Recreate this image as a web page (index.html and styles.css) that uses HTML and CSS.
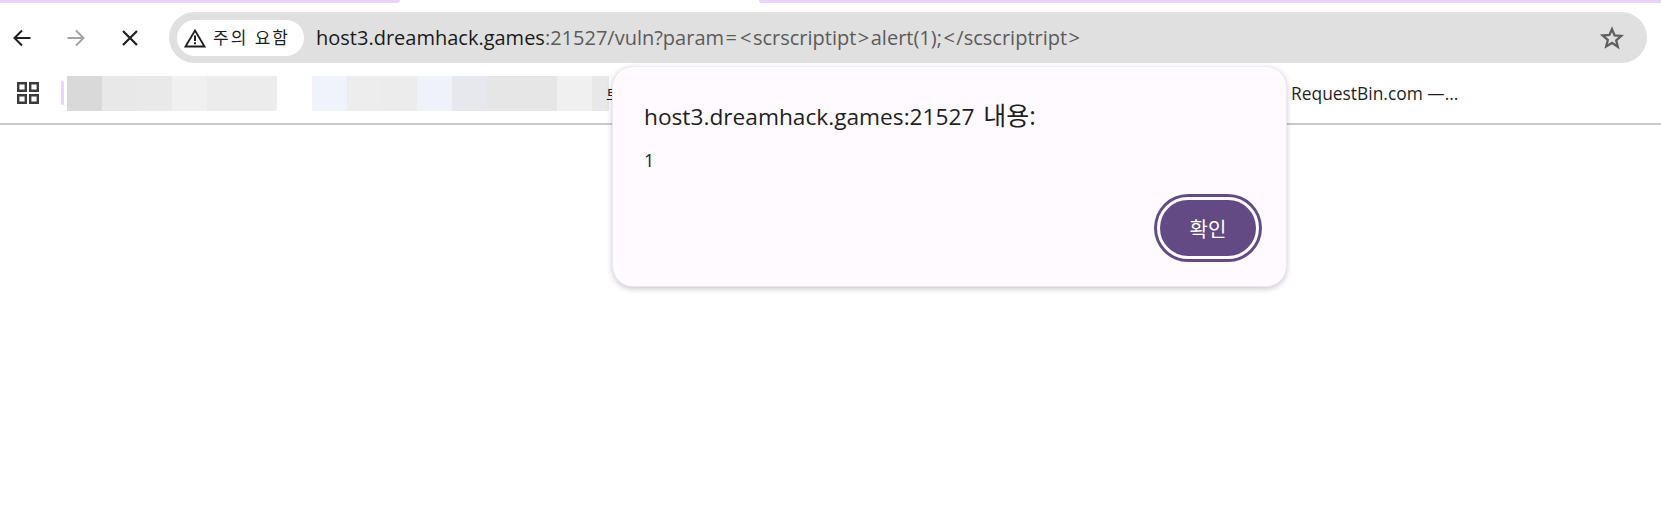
FILE: index.html
```html
<!DOCTYPE html>
<html lang="ko">
<head>
<meta charset="utf-8">
<title>host3.dreamhack.games</title>
<link rel="stylesheet" href="styles.css">
</head>
<body>
<div class="tabstrip">
  <div class="tab tab-first"></div>
  <div class="tab tab-second"></div>
</div>
<div class="toolbar">
  <svg class="nav-icon" viewBox="0 0 24 24"><path d="M20.500 12H5M12 4.500 4.500 12l7.500 7.500" fill="none" stroke="#1f1f1f" stroke-width="2"/></svg>
  <svg class="nav-icon" viewBox="0 0 24 24"><path d="M3.500 12H19M12 4.500l7.500 7.500-7.500 7.500" fill="none" stroke="#a3a3a3" stroke-width="2"/></svg>
  <svg class="nav-icon" viewBox="0 0 24 24"><path d="M5 5l14 14M19 5 5 19" fill="none" stroke="#1f1f1f" stroke-width="2.200"/></svg>
  <div class="omnibox">
    <div class="chip">
      <svg class="warn" viewBox="0 0 22 20"><path d="M11 2.500 20.500 18.500H1.500Z" fill="none" stroke="#1f1f1f" stroke-width="1.800"/><path d="M11 7.500v5.500M11 14.200v2" fill="none" stroke="#1f1f1f" stroke-width="2"/></svg>
      <span class="chip-text">주의 요함</span>
    </div>
    <div class="url"><span class="host">host3.dreamhack.games</span>:21527/vuln?param<span class="sym">=</span><span class="sym">&lt;</span>scrscriptipt<span class="sym">&gt;</span>alert(1);<span class="sym">&lt;</span>/scscriptript<span class="sym">&gt;</span></div>
    <svg class="star" viewBox="0 0 24 24"><path d="M12 3.200l2.600 6.200 6.700.500-5.100 4.400 1.600 6.500L12 16.900l-5.800 3.500 1.600-6.500-5.100-4.400 6.700-.500Z" fill="none" stroke="#5f5f5f" stroke-width="2.300"/></svg>
  </div>
</div>
<div class="bookmarks">
  <svg class="apps" viewBox="0 0 22 22"><path d="M1.200 1.200h7.600v7.600H1.200ZM13.200 1.200h7.600v7.600h-7.600ZM1.200 13.200h7.600v7.600H1.200ZM13.200 13.200h7.600v7.600h-7.600Z" fill="none" stroke="#3c3c3c" stroke-width="2.400"/></svg>
  <div class="divider"></div>
  <div class="blur">
    <i class="b c1"></i><i class="b c2"></i><i class="b c3"></i><i class="b c4"></i><i class="b c5"></i><i class="b c5"></i>
    <i class="b c0"></i>
    <i class="b c6"></i><i class="b c7"></i><i class="b c8"></i><i class="b c9"></i><i class="b c10"></i><i class="b c11"></i><i class="b c11"></i><i class="b c4"></i><i class="b c12"></i>
  </div>
  <span class="clipped">토</span>
  <span class="bookmark">RequestBin.com —...</span>
</div>
<div class="dialog">
  <div class="dialog-title">host3.dreamhack.games:21527 <span class="ko">내용:</span></div>
  <div class="dialog-msg">1</div>
  <div class="dialog-actions"><button class="ok">확인</button></div>
</div>
</body>
</html>
```
FILE: styles.css
```css
* { box-sizing: border-box; }
html, body { margin: 0; height: 100%; }
body {
  background: #fff;
  color: #1f1f1f;
  font-family: "Open Sans", "Noto Sans CJK KR", sans-serif;
  overflow: hidden;
}
.tabstrip { display: flex; height: 3px; gap: 359px; }
.tab { background: #e9d5ff; height: 3px; }
.tab-first { width: 400px; border-bottom-right-radius: 4px; }
.tab-second { flex: 1; border-bottom-left-radius: 4px; }

.toolbar {
  display: flex;
  align-items: center;
  height: 51px;
  margin-top: 9px;
  padding: 0 14px 0 0;
}
.nav-icon { width: 24px; height: 24px; flex: none; margin-left: 10px; margin-right: 30px; }
.nav-icon + .nav-icon { margin-left: 0; margin-right: 30px; }
.nav-icon + .nav-icon + .nav-icon { margin-right: 27px; }

.omnibox {
  flex: 1;
  display: flex;
  align-items: center;
  height: 51px;
  background: #e0e0e0;
  border-radius: 26px;
  padding: 0 23px 0 8px;
}
.chip {
  display: flex;
  align-items: center;
  gap: 7px;
  height: 36px;
  width: 127px;
  padding-left: 7px;
  background: #fff;
  border-radius: 18px;
  flex: none;
}
.warn { width: 22px; height: 20px; flex: none; }
.chip-text { font-size: 17px; letter-spacing: 2px; color: #1f1f1f; white-space: nowrap; position: relative; top: -1px; }
.url {
  flex: 1;
  margin-left: 12px;
  font-size: 20px;
  color: #5b5b5b;
  white-space: nowrap;
}
.sym { padding: 0 1.500px; }
.host { color: #1a1a1a; }
.star { width: 24px; height: 24px; flex: none; }

.bookmarks {
  display: flex;
  align-items: center;
  height: 54px;
  margin-top: 8px;
  border-bottom: 2px solid #c9c9c9;
  padding-bottom: 8px;
}
.apps { width: 22px; height: 22px; margin-left: 17px; flex: none; }
.divider { width: 3px; height: 24px; margin-left: 22px; background: #e9d5ff; border-radius: 2px; flex: none; }
.blur { display: flex; height: 35px; margin-left: 3px; flex: none; }
.b { display: block; width: 35px; height: 35px; }
.c0 { background: #fff; }
.c1 { background: #d9d9d9; }
.c2 { background: #e8e8e8; }
.c3 { background: #e9e9e9; }
.c4 { background: #f0f0f0; }
.c5 { background: #ececec; }
.c6 { background: #f0f3f9; }
.c7 { background: #ededed; }
.c8 { background: #edecec; }
.c9 { background: #eff2f8; }
.c10 { background: #e7e8ee; }
.c11 { background: #e6e6e6; }
.c12 { background: #e8e8e8; width: 17px; }
.clipped { font-size: 15px; margin-left: -3px; width: 20px; flex: none; color: #1f1f1f; }
.bookmark { font-size: 17.400px; margin-left: 665px; white-space: nowrap; color: #1f1f1f; }

.dialog {
  position: absolute;
  left: 613px;
  top: 67px;
  width: 673px;
  height: 219px;
  background: #fefaff;
  border-radius: 20px;
  box-shadow: 0 0 0 1px #eee8f0, 0 2px 6px rgba(60, 50, 70, .35);
  padding: 34px 31px 24px;
}
.dialog-title { font-size: 22.700px; line-height: 28px; color: #1f1f1f; white-space: nowrap; }
.ko { font-size: 25px; margin-left: 3px; }
.dialog-msg { font-size: 18px; line-height: 22px; margin-top: 18px; color: #1f1f1f; }
.dialog-actions { display: flex; justify-content: flex-end; margin-top: 26px; margin-right: -4px; }
.ok {
  width: 102px;
  height: 62px;
  border-radius: 31px;
  background: #644a84;
  border: 3px solid #fff;
  box-shadow: 0 0 0 3px #644a84;
  color: #fff;
  font: 20px "Noto Sans CJK KR", sans-serif;
  padding: 0;
}
```
